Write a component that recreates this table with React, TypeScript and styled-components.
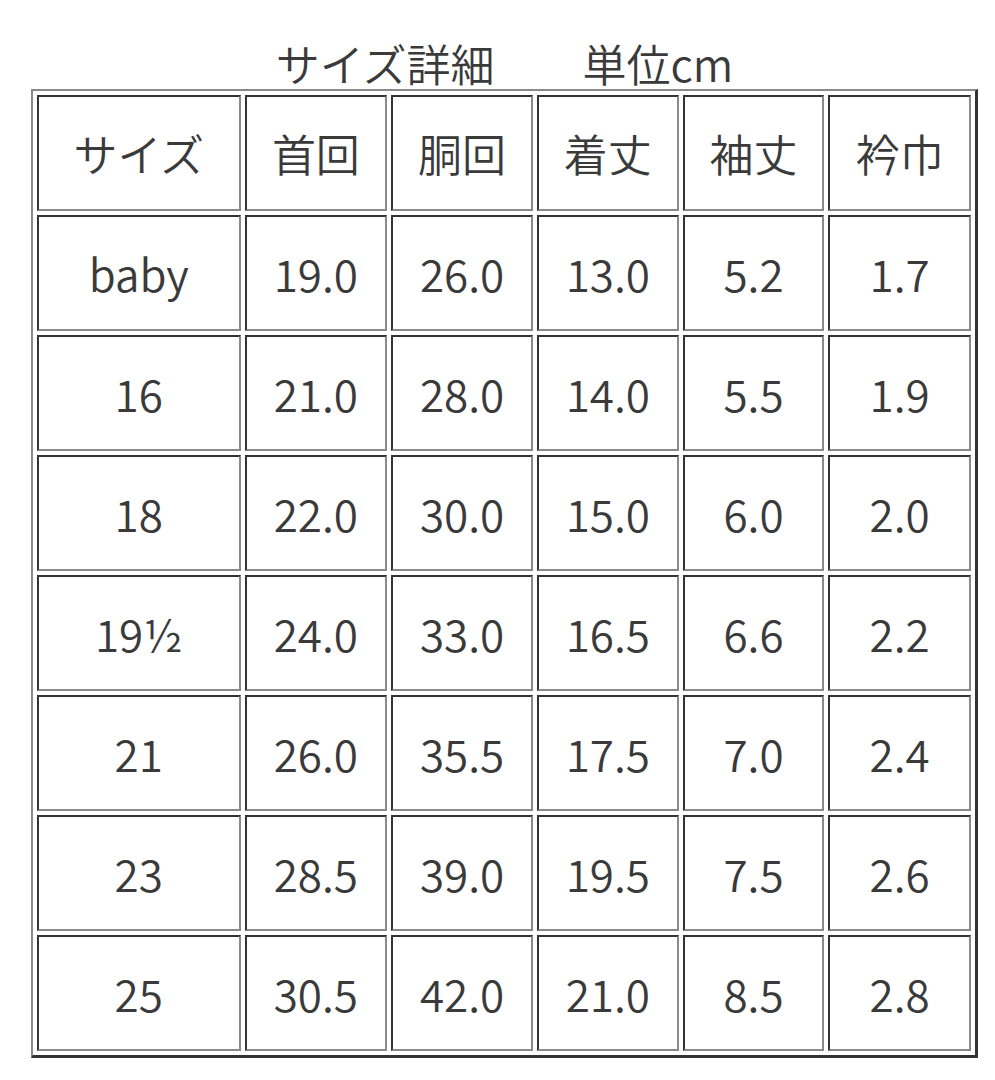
import React from "react";
import styled, { createGlobalStyle } from "styled-components";

const GlobalStyle = createGlobalStyle`
  html, body {
    margin: 0;
    padding: 0;
    background: #ffffff;
  }
  body {
    font-family: "Noto Sans CJK JP", "Noto Sans", sans-serif;
    color: #3a3a3a;
  }
`;

const Page = styled.div`
  width: 995px;
  height: 1080px;
  padding-top: 37px;
  box-sizing: border-box;
`;

const Wrapper = styled.div`
  margin-left: 31px;
  width: 947px;
`;

const Title = styled.h1`
  margin: 0;
  height: 52px;
  line-height: 52px;
  text-align: center;
  font-size: 44px;
  font-weight: 350;
  color: #3a3a3a;
  white-space: pre;
`;

const Table = styled.table`
  border-collapse: separate;
  border-spacing: 4px;
  table-layout: fixed;
  border-style: solid;
  border-width: 2px 3px 3px 2px;
  border-color: #8a8a8a #333333 #333333 #8a8a8a;
`;

const Cell = styled.td<{ $w?: number }>`
  box-sizing: border-box;
  width: ${(p) => (p.$w ? `${p.$w}px` : "auto")};
  height: 116px;
  padding: 0;
  border-style: solid;
  border-width: 2px;
  border-color: #333333 #8a8a8a #8a8a8a #333333;
  text-align: center;
  vertical-align: middle;
  font-size: 44px;
  font-weight: 350;
  color: #3a3a3a;
  line-height: 1;
`;

const HeadCell = styled(Cell).attrs({ as: "th" })``;

const widths = [204, 143, 142, 142, 142, 143];
const headers = ["サイズ", "首回", "胴回", "着丈", "袖丈", "衿巾"];
const rows: string[][] = [
  ["baby", "19.0", "26.0", "13.0", "5.2", "1.7"],
  ["16", "21.0", "28.0", "14.0", "5.5", "1.9"],
  ["18", "22.0", "30.0", "15.0", "6.0", "2.0"],
  ["19½", "24.0", "33.0", "16.5", "6.6", "2.2"],
  ["21", "26.0", "35.5", "17.5", "7.0", "2.4"],
  ["23", "28.5", "39.0", "19.5", "7.5", "2.6"],
  ["25", "30.5", "42.0", "21.0", "8.5", "2.8"],
];

export default function App() {
  return (
    <Page>
      <GlobalStyle />
      <Wrapper>
        <Title>{"サイズ詳細　　単位cm"}</Title>
        <Table>
          <thead>
            <tr>
              {headers.map((h, i) => (
                <HeadCell key={h} $w={widths[i]}>
                  {h}
                </HeadCell>
              ))}
            </tr>
          </thead>
          <tbody>
            {rows.map((r) => (
              <tr key={r[0]}>
                {r.map((v, i) => (
                  <Cell key={i}>{v}</Cell>
                ))}
              </tr>
            ))}
          </tbody>
        </Table>
      </Wrapper>
    </Page>
  );
}
